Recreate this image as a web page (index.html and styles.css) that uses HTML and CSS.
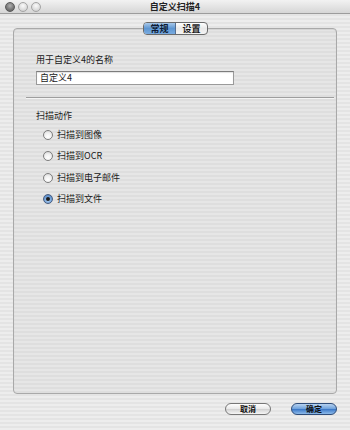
FILE: index.html
```html
<!DOCTYPE html>
<html>
<head>
<meta charset="utf-8">
<link rel="stylesheet" href="styles.css">
</head>
<body>
<div class="window">
  <div class="titlebar">
    <div class="lights">
      <span class="light graphite"></span>
      <span class="light"></span>
      <span class="light"></span>
    </div>
    <div class="title">自定义扫描4</div>
  </div>
  <div class="body">
    <div class="tabs">
      <span class="tab active">常规</span><span class="tab">设置</span>
    </div>
    <div class="panel">
      <div class="field-label">用于自定义4的名称</div>
      <div class="input">自定义4</div>
      <div class="sep"></div>
      <div class="group-label">扫描动作</div>
      <div class="radios">
        <div class="radio"><span class="dot"></span><span>扫描到图像</span></div>
        <div class="radio"><span class="dot"></span><span>扫描到OCR</span></div>
        <div class="radio"><span class="dot"></span><span>扫描到电子邮件</span></div>
        <div class="radio"><span class="dot on"></span><span>扫描到文件</span></div>
      </div>
    </div>
    <div class="buttons">
      <span class="btn">取消</span>
      <span class="btn default">确定</span>
    </div>
  </div>
</div>
</body>
</html>
```
FILE: styles.css
```css
html, body {
  margin: 0;
  padding: 0;
}
body {
  width: 350px;
  height: 430px;
  overflow: hidden;
  font-family: "Noto Sans CJK SC", "Noto Sans", sans-serif;
  font-size: 9px;
  color: #1a1a1a;
  background: repeating-linear-gradient(to bottom, #ededed 0, #ededed 2px, #e4e4e4 2px, #e4e4e4 4px);
}
.window {
  height: 430px;
  display: flex;
  flex-direction: column;
}
.titlebar {
  height: 14px;
  flex: none;
  display: flex;
  align-items: center;
  position: relative;
  background: linear-gradient(to bottom, #f2f2f2, #d6d6d6);
  border-bottom: 1px solid #9c9c9c;
  box-sizing: border-box;
}
.lights {
  display: flex;
  gap: 3px;
  padding-left: 5px;
}
.light {
  width: 10px;
  height: 10px;
  border-radius: 50%;
  box-sizing: border-box;
  border: 1px solid #a4a4a4;
  background: radial-gradient(circle at 50% 35%, #fafafa 0, #dcdcdc 60%, #c4c4c4 100%);
}
.light.graphite {
  border-color: #5a5a5a;
  background: radial-gradient(circle at 50% 35%, #b0b0b0 0, #7a7a7a 55%, #555 100%);
}
.title {
  position: absolute;
  left: 0;
  right: 0;
  text-align: center;
  font-size: 9px;
  font-weight: bold;
  color: #222;
  line-height: 14px;
  pointer-events: none;
}
.body {
  flex: 1;
  display: flex;
  flex-direction: column;
  padding: 8px 13px 0 13px;
}
.tabs {
  align-self: center;
  display: flex;
  margin-left: 1px;
  height: 13px;
  border: 1px solid #6b6b6b;
  border-radius: 4px;
  overflow: hidden;
  box-sizing: border-box;
  position: relative;
  z-index: 1;
  margin-bottom: -7px;
  background: linear-gradient(to bottom, #ffffff, #e9e9e9 50%, #f4f4f4);
}
.tab {
  display: flex;
  align-items: center;
  justify-content: center;
  width: 31px;
  font-size: 9px;
  font-weight: bold;
  line-height: 11px;
  color: #1a1a1a;
}
.tab.active {
  background: linear-gradient(to bottom, #a7c8ea, #5f97d2 50%, #79abe0);
  border-right: 1px solid #556f92;
  color: #0d1a33;
}
.panel {
  height: 366px;
  box-sizing: border-box;
  border: 1px solid #a9a9a9;
  border-radius: 4px;
  background: repeating-linear-gradient(to bottom, #e6e6e6 0, #e6e6e6 2px, #dedede 2px, #dedede 4px);
  box-shadow: inset 0 1px 1px rgba(0,0,0,0.08);
  padding: 25px 2px 0 12px;
  display: flex;
  flex-direction: column;
}
.field-label {
  padding-left: 10px;
  line-height: 12px;
  height: 12px;
}
.input {
  margin: 5px 0 0 10px;
  width: 198px;
  height: 14px;
  box-sizing: border-box;
  background: #fff;
  border: 1px solid #9a9a9a;
  border-top-color: #7c7c7c;
  box-shadow: inset 0 1px 1px rgba(0,0,0,0.12);
  padding-left: 3px;
  line-height: 12px;
  font-size: 9px;
}
.sep {
  margin-top: 12px;
  height: 1px;
  background: #9e9e9e;
  border-bottom: 1px solid #f4f4f4;
}
.group-label {
  margin-top: 11px;
  padding-left: 10px;
  line-height: 12px;
}
.radios {
  display: flex;
  flex-direction: column;
  gap: 9.3px;
  margin-top: 7px;
  padding-left: 17px;
}
.radio {
  display: flex;
  align-items: center;
  gap: 4px;
  height: 12px;
  line-height: 12px;
}
.dot {
  width: 10px;
  height: 10px;
  border-radius: 50%;
  box-sizing: border-box;
  border: 1px solid #7d7d7d;
  background: radial-gradient(circle at 50% 70%, #ffffff 0, #f0f0f0 50%, #cfcfcf 100%);
  position: relative;
}
.dot.on {
  border-color: #4a5e80;
  background: radial-gradient(circle at 50% 65%, #b9d5f3 0, #6f9fd6 55%, #3f6fae 100%);
}
.dot.on::after {
  content: "";
  position: absolute;
  left: 2px;
  top: 2px;
  width: 4px;
  height: 4px;
  border-radius: 50%;
  background: #1a1a1a;
}
.buttons {
  display: flex;
  justify-content: flex-end;
  gap: 20px;
  margin-top: 9px;
  padding-right: 0;
}
.btn {
  width: 46px;
  height: 12px;
  box-sizing: border-box;
  border: 1px solid #777;
  border-radius: 6px;
  background: linear-gradient(to bottom, #ffffff, #e8e8e8 50%, #d4d4d4 55%, #f6f6f6);
  display: flex;
  align-items: center;
  justify-content: center;
  font-size: 8px;
  font-weight: bold;
  color: #111;
  line-height: 10px;
}
.btn.default {
  border-color: #2f4d7a;
  background: linear-gradient(to bottom, #b8d3f0, #6b9fdb 50%, #3f7bc9 55%, #8ebbea);
}
```
